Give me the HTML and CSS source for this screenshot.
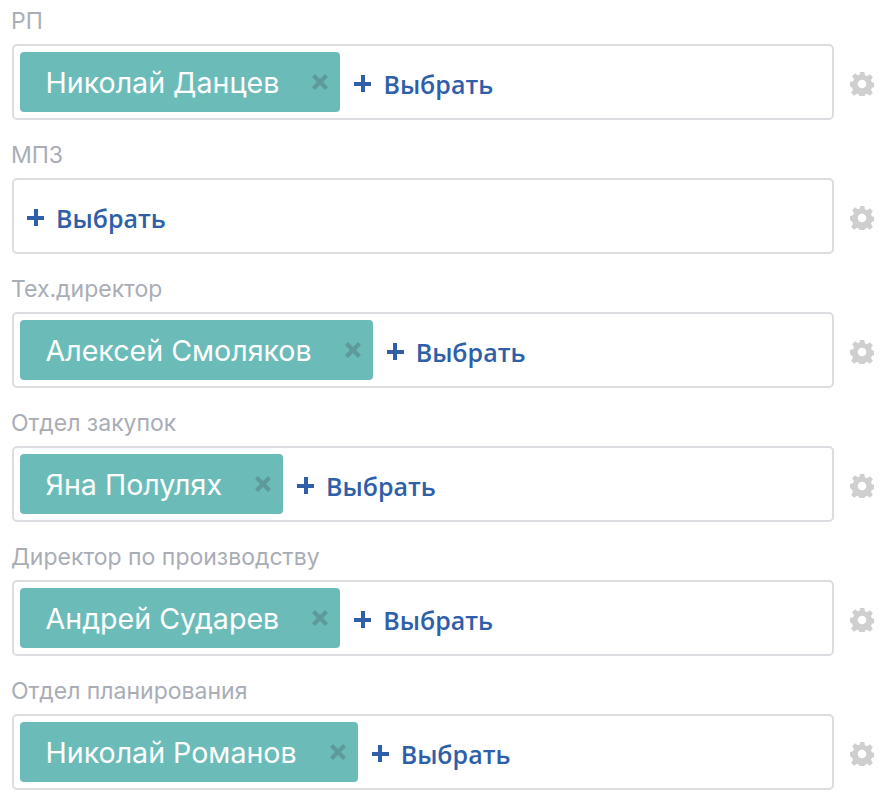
FILE: index.html
```html
<!DOCTYPE html>
<html lang="en">

<head>
    <meta charset="UTF-8">
    <title>Участники</title>
    <link rel="stylesheet" href="styles.css">
</head>

<body>
    <svg class="sprite" width="0" height="0">
        <symbol id="gear" viewBox="0 0 24 24">
            <path fill-rule="evenodd" d="M9.700 0h4.600l.6 3.300 2.200.9 2.800-1.900 3 3-1.900 2.800.9 2.200 3.100.600v4.200l-3.100.6-.9 2.200 1.900 2.800-3 3-2.800-1.900-2.200.9-.6 3.300H9.700l-.6-3.300-2.200-.9-2.800 1.900-3-3 1.900-2.800-.9-2.200L0 14.100V9.900l3.100-.6.9-2.200-1.900-2.800 3-3 2.800 1.900 2.200-.9zM12 7.700a4.300 4.300 0 1 0 0 8.600 4.300 4.300 0 0 0 0-8.600z"/>
        </symbol>
        <symbol id="close" viewBox="0 0 16 16">
            <path d="M3 0 8 5 13 0 16 3 11 8 16 13 13 16 8 11 3 16 0 13 5 8 0 3z"/>
        </symbol>
    </svg>

    <div class="form">
        <div class="field">
            <div class="field_label">РП</div>
            <div class="field_row">
                <div class="picker">
                    <span class="chip">Николай Данцев<svg class="chip_close"><use href="#close"></use></svg></span>
                    <a class="add_btn"><span class="add_plus"></span>Выбрать</a>
                </div>
                <svg class="gear"><use href="#gear"></use></svg>
            </div>
        </div>

        <div class="field">
            <div class="field_label">МПЗ</div>
            <div class="field_row">
                <div class="picker">
                    <a class="add_btn add_btn_only"><span class="add_plus"></span>Выбрать</a>
                </div>
                <svg class="gear"><use href="#gear"></use></svg>
            </div>
        </div>

        <div class="field">
            <div class="field_label">Тех.директор</div>
            <div class="field_row">
                <div class="picker">
                    <span class="chip">Алексей Смоляков<svg class="chip_close"><use href="#close"></use></svg></span>
                    <a class="add_btn"><span class="add_plus"></span>Выбрать</a>
                </div>
                <svg class="gear"><use href="#gear"></use></svg>
            </div>
        </div>

        <div class="field">
            <div class="field_label">Отдел закупок</div>
            <div class="field_row">
                <div class="picker">
                    <span class="chip">Яна Полулях<svg class="chip_close"><use href="#close"></use></svg></span>
                    <a class="add_btn"><span class="add_plus"></span>Выбрать</a>
                </div>
                <svg class="gear"><use href="#gear"></use></svg>
            </div>
        </div>

        <div class="field">
            <div class="field_label">Директор по производству</div>
            <div class="field_row">
                <div class="picker">
                    <span class="chip">Андрей Сударев<svg class="chip_close"><use href="#close"></use></svg></span>
                    <a class="add_btn"><span class="add_plus"></span>Выбрать</a>
                </div>
                <svg class="gear"><use href="#gear"></use></svg>
            </div>
        </div>

        <div class="field">
            <div class="field_label">Отдел планирования</div>
            <div class="field_row">
                <div class="picker">
                    <span class="chip">Николай Романов<svg class="chip_close"><use href="#close"></use></svg></span>
                    <a class="add_btn"><span class="add_plus"></span>Выбрать</a>
                </div>
                <svg class="gear"><use href="#gear"></use></svg>
            </div>
        </div>
    </div>
</body>

</html>
```

FILE: styles.css
```css
body {
    margin: 0;
    background: #ffffff;
    font-family: Inter, "Liberation Sans", sans-serif;
}

.sprite {
    position: absolute;
}

.form {
    display: flex;
    flex-direction: column;
    gap: 14px;
    padding: 0 0 0 12px;
}

.field_label {
    height: 44px;
    margin-left: -1px;
    line-height: 42px;
    font-size: 23px;
    color: #a9adb6;
}

.field_row {
    display: flex;
    align-items: center;
}

.picker {
    display: flex;
    align-items: center;
    box-sizing: border-box;
    width: 822px;
    height: 76px;
    padding: 0 6px;
    background: #ffffff;
    border: 2px solid #dddde1;
    border-radius: 5px;
}

.chip {
    display: flex;
    align-items: center;
    height: 60px;
    padding: 0 12px 0 25.5px;
    background: #6bbcb9;
    border-radius: 4px;
    color: #ffffff;
    font-size: 28.6px;
    white-space: pre;
}

.chip_close {
    width: 16px;
    height: 16px;
    margin-left: 33px;
    fill: #5e9a9c;
}

.add_btn {
    display: flex;
    align-items: center;
    margin-top: 3px;
    margin-left: 14px;
    color: #2f5fa8;
    font-family: "Open Sans", sans-serif;
    font-size: 25px;
    font-weight: 600;
}

.add_btn_only {
    margin-left: 7px;
}

.add_plus {
    width: 17px;
    height: 17px;
    margin-right: 12px;
    background:
        linear-gradient(#2f5fa8, #2f5fa8) center / 100% 4px no-repeat,
        linear-gradient(#2f5fa8, #2f5fa8) center / 4px 100% no-repeat;
}

.gear {
    width: 24px;
    height: 24px;
    margin-top: 3px;
    margin-left: 16px;
    fill: #cfcfcf;
}
```
